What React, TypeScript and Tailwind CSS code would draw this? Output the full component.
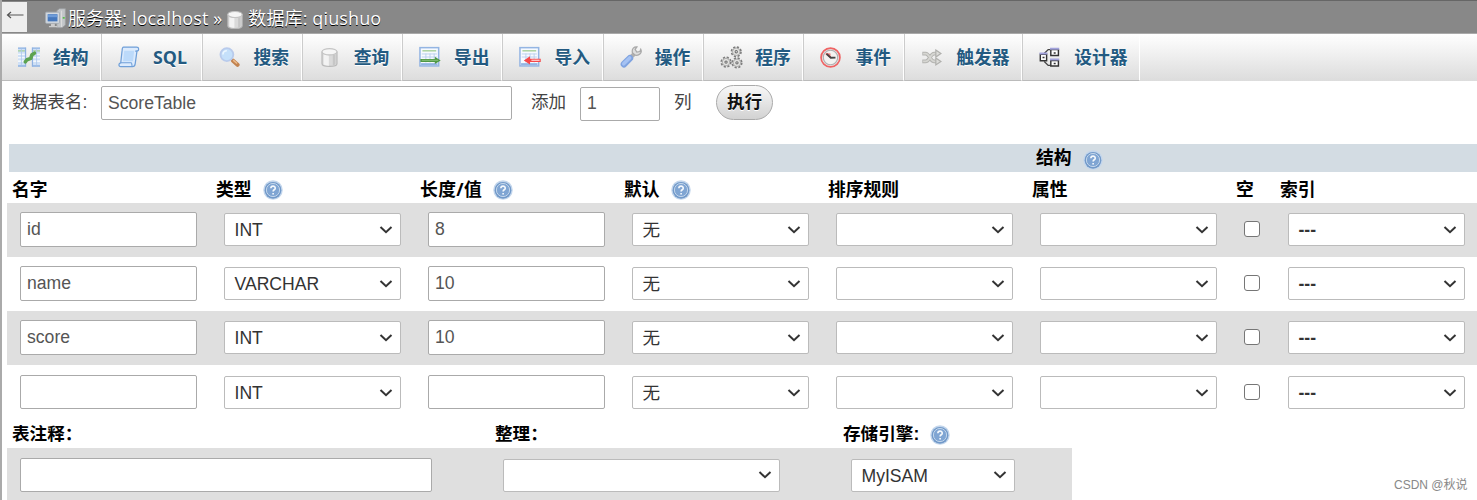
import type { ReactNode } from "react";

const sans = "font-['Liberation_Sans','Noto_Sans_CJK_SC',sans-serif]";
const ui = "font-['Open_Sans','Noto_Sans_CJK_SC',sans-serif]";

function Icon({ children, className = "h-[21px] w-[21px]" }: { children: ReactNode; className?: string }) {
  return (
    <svg viewBox="0 0 16 16" className={`block shrink-0 ${className}`} fill="none">
      {children}
    </svg>
  );
}

function StructureIcon() {
  return (
    <Icon className="h-[22px] w-[22px]">
      <path d="M0 1.200h5.500v13.600H0zM10.500 1.200H16v13.600h-5.500z" fill="#cfe0f6" />
      <path d="M0 1.500h5.500M10.500 1.500H16M0 14.500h5.500M10.500 14.500H16" stroke="#8db1e2" />
      <path d="M0 3.500h5M11 3.500h5" stroke="#a5cf98" />
      <path d="M0 6h5M0 8.500h5M0 11h5M11 6h5M11 8.500h5M11 11h5" stroke="#fff" strokeWidth=".8" />
      <path d="M5.500 1v14M10.500 1v14" stroke="#8fb2e2" strokeWidth=".9" />
      <path d="M2.500 2v12M13.500 2v12" stroke="#adc8ec" strokeWidth=".6" />
      <path d="M5.300 11.500 6.500 10 9.300 9l.8-2.600L12 5.200" stroke="#5ca350" strokeWidth="2.600" strokeLinecap="round" strokeLinejoin="round" />
    </Icon>
  );
}

function SqlIcon() {
  return (
    <Icon className="h-[22px] w-[22px]">
      <path d="M4 .8h9.500c2 0 2 2.700.3 2.900L12.500 13c-.2 1.600-.8 2-2 2H2C.2 15 .3 12.300 2 12.200L3 3C3.100 1.400 3.300.8 4 .8z" fill="#dcebfd" stroke="#6f9fd8" strokeWidth=".9" />
      <path d="M12.500 3.700h1.500M2 12.200h7.500c1 0 .2 2.500 1 2.500" stroke="#6f9fd8" strokeWidth=".8" />
      <path d="M4.500 3.500h7.300l-.9 7.500H3.700z" fill="#bcdafa" />
    </Icon>
  );
}

function SearchIcon() {
  return (
    <Icon>
      <path d="m10.700 10.500 3.400 3" stroke="#c28350" strokeWidth="3.200" strokeLinecap="round" />
      <path d="m10.800 10 3 2.600" stroke="#edbd8d" strokeWidth="1.100" />
      <circle cx="6" cy="5.800" r="4.900" fill="#c5e0fa" stroke="#b9cbec" strokeWidth="1.400" />
      <path d="M3 5.800c0-2 1.300-3 3-3" stroke="#edf7ff" strokeWidth="1.200" />
    </Icon>
  );
}

function DatabaseIcon({ className }: { className?: string }) {
  return (
    <Icon className={className}>
      <path d="M2.300 3.500v9.300c0 2.700 11.400 2.700 11.400 0V3.500" fill="#dadada" stroke="#b9b9b9" strokeWidth=".9" />
      <path d="M3.500 5.500v7.700c1 .8 2.500 1 4 1V6.500z" fill="#f3f3f3" />
      <path d="M12.500 5.500v7.700c-.6.500-1.300.6-2 .8V6.200z" fill="#c6c6c6" />
      <ellipse cx="8" cy="3.600" rx="5.700" ry="2.400" fill="#f6f6f6" stroke="#c4c4c4" strokeWidth=".9" />
    </Icon>
  );
}

function Sheet() {
  return (
    <>
      <rect x=".7" y="1.200" width="13.600" height="13.300" fill="#f7faff" stroke="#94b5e3" strokeWidth="1.100" />
      <path d="M2.500 3.500h10" stroke="#a5cf98" />
      <path d="M2 5.800h11M2 8h11M5 5.500V12M8 5.500V12M11 5.500V12" stroke="#bad0ee" strokeWidth=".7" />
      <path d="M1.500 13.200h12" stroke="#94b5e3" strokeWidth="1.500" />
    </>
  );
}

function ExportIcon() {
  return (
    <Icon className="h-[22px] w-[22px]">
      <Sheet />
      <path d="M1 9.400h10.500V7.900l4.300 2.600-4.300 2.600v-1.500H1z" fill="#4f9845" />
      <path d="M2 10.400h12" stroke="#92c987" strokeWidth=".6" />
    </Icon>
  );
}

function ImportIcon() {
  return (
    <Icon className="h-[22px] w-[22px]">
      <Sheet />
      <path d="M15.800 9.200v2.500H8v1.800l-4.500-3L8 7.400v1.800z" fill="#f6494b" />
      <path d="M9 10.400h6" stroke="#ffc2c2" strokeWidth="1" />
    </Icon>
  );
}

function WrenchIcon() {
  return (
    <Icon className="h-[22px] w-[22px]">
      <path d="m8 8 3.500-3.300" stroke="#b0b0b0" strokeWidth="3" />
      <path d="M9 4.800C8.400 1.800 10.300.5 12.300.7L11 2.400l1.200 2 2.300-.4.600-1.600c1.300 2.700-1.500 5.200-4.500 4z" fill="#dedede" stroke="#a9a9a9" strokeWidth=".9" />
      <path d="m2.900 13.200 4.300-4.300" stroke="#7fa3e0" strokeWidth="4.800" strokeLinecap="round" />
      <path d="m2.700 12.900 4.300-4.200" stroke="#a5c2f3" strokeWidth="2.600" strokeLinecap="round" />
    </Icon>
  );
}

function Cog({ x, y }: { x: number; y: number }) {
  return (
    <g>
      <circle cx={x} cy={y} r="3.300" stroke="#7d7d7d" strokeWidth="1.200" strokeDasharray="1.500 1.100" fill="#e6e6e6" />
      <circle cx={x} cy={y} r="2.600" fill="#e2e2e0" stroke="#999" strokeWidth=".5" />
      <circle cx={x} cy={y} r=".8" fill="#eee" stroke="#6b6b6b" strokeWidth=".7" />
    </g>
  );
}

function RoutinesIcon() {
  return (
    <Icon className="h-[23px] w-[23px]">
      <Cog x={11.300} y={4} />
      <Cog x={4.200} y={11.200} />
      <Cog x={11.800} y={11.700} />
    </Icon>
  );
}

function ClockIcon() {
  return (
    <Icon>
      <circle cx="8" cy="8" r="7.200" fill="#e7e7e7" stroke="#ef6464" strokeWidth="1.300" />
      <circle cx="8" cy="8" r="5.500" fill="#f3f3f1" stroke="#b0b0b0" strokeWidth=".9" />
      <path d="M4.300 4.600 8 5v3z" fill="#ee7a78" />
      <path d="m4.500 5 3.700 3" stroke="#e65757" strokeWidth="1.200" />
      <path d="m5 5.200 3.200 3 3.600-.1" stroke="#444" strokeWidth="1.400" />
    </Icon>
  );
}

function TriggerIcon() {
  return (
    <Icon>
      <path d="M1 5h2.500c3 0 3.500 6 6.500 6h2M1 11h2.500c3 0 3.500-6 6.500-6h2" stroke="#b4b4b1" strokeWidth="2.800" />
      <path d="M1.600 5h2c3 0 3.500 6 6.500 6h2M1.600 11h2c3 0 3.500-6 6.500-6h2" stroke="#d6d6d2" strokeWidth="1.300" />
      <path d="m11.300 2.300 3.900 2.700-3.900 2.700zM11.300 8.300l3.900 2.700-3.900 2.700z" fill="#dcdcd9" stroke="#b0b0ad" strokeWidth=".9" />
    </Icon>
  );
}

function DesignerIcon() {
  return (
    <Icon>
      <path d="M4 5 7 2h2M4 11l3 3h2" stroke="#444" />
      <path d="M1 5.500h4.800v5H1zM9 2h5.800v4.500H9zM9 10.300h5.800v4.200H9z" fill="#fff" stroke="#333" strokeWidth="1.100" />
      <path d="M.4 4.900h6M8.400 1.400h7M8.400 9.600h7" stroke="#a3a3dc" strokeWidth="1.500" />
      <path d="M2.700 8h1.500M11.200 4.500h1.500M11.200 12.500h1.500" stroke="#333" strokeWidth="1.100" />
    </Icon>
  );
}

function ServerIcon() {
  return (
    <Icon className="h-[21px] w-[21px]">
      <path d="m9 2 2-1.500h4.500V13L13 15H9z" fill="#c3c6c9" stroke="#9b9ea1" strokeWidth=".6" />
      <path d="M12.600 2v12.500" stroke="#dcdcdc" strokeWidth=".8" />
      <path d="M13.500 7.500H15" stroke="#55c046" strokeWidth="1.300" />
      <rect x=".5" y="3.200" width="10.500" height="8.500" rx=".6" fill="#d4dae1" stroke="#a6adb5" strokeWidth=".7" />
      <path d="M2 4.700h7.500v5.500H2z" fill="#4678bd" />
      <path d="M2.300 5h7v2h-7z" fill="#6d9bd8" />
      <path d="M4.500 12h3v1.700h1.700v1H3v-1h1.500z" fill="#ccc" />
    </Icon>
  );
}

function HelpIcon({ className = "mt-px" }: { className?: string }) {
  return (
    <Icon className={`h-5 w-5 ${className}`}>
      <circle cx="8" cy="8" r="7.800" fill="#c3d6ec" />
      <circle cx="8" cy="8.200" r="6.700" fill="#7199c9" />
      <circle cx="8" cy="8" r="5.300" fill="#7fa5d3" stroke="#c3d6eb" strokeWidth=".8" />
      <path d="M6.300 6.600c0-2.300 3.500-2.300 3.500-.1 0 1.300-1.700 1.300-1.700 2.600M8.100 10.300v1.300" stroke="#f4f8fc" strokeWidth="1.300" />
    </Icon>
  );
}

const tabs: { label: string; icon: ReactNode; width: string }[] = [
  { label: "结构", icon: <StructureIcon />, width: "w-[99px]" },
  { label: "SQL", icon: <SqlIcon />, width: "w-[100.500px]" },
  { label: "搜索", icon: <SearchIcon />, width: "w-[100.200px]" },
  { label: "查询", icon: <DatabaseIcon />, width: "w-[100.400px]" },
  { label: "导出", icon: <ExportIcon />, width: "w-[100.300px]" },
  { label: "导入", icon: <ImportIcon />, width: "w-[100.300px]" },
  { label: "操作", icon: <WrenchIcon />, width: "w-[100.500px]" },
  { label: "程序", icon: <RoutinesIcon />, width: "w-[100.300px]" },
  { label: "事件", icon: <ClockIcon />, width: "w-[100.700px]" },
  { label: "触发器", icon: <TriggerIcon />, width: "w-[118px]" },
  { label: "设计器", icon: <DesignerIcon />, width: "w-[118px]" },
];

function Field({ value = "", className }: { value?: string; className: string }) {
  return (
    <input
      readOnly
      value={value}
      className={`block shrink-0 rounded-[2px] border border-[#aaa] bg-white px-1.5 text-[17.600px] text-[#555] outline-none ${className}`}
    />
  );
}

function Select({ value = "", className = "w-[177px]" }: { value?: string; className?: string }) {
  return (
    <div className={`flex h-[33px] shrink-0 items-center justify-between rounded-[2px] border border-[#bbb] bg-white pr-[7px] pl-[9.500px] text-[17.600px] text-[#333] ${className}`}>
      <span className={value === "---" ? "mt-px leading-6 font-bold" : "mt-px leading-6"}>{value}</span>
      <svg viewBox="0 0 14 10" className="h-2.5 w-3.5" fill="none">
        <path d="m1.500 2 5.500 5.200L12.500 2" stroke="#333" strokeWidth="2" />
      </svg>
    </div>
  );
}

const columns = [
  { label: "名字", help: false },
  { label: "类型", help: true },
  { label: "长度/值", help: true },
  { label: "默认", help: true },
  { label: "排序规则", help: false },
  { label: "属性", help: false },
  { label: "空", help: false },
  { label: "索引", help: false },
];

const rows = [
  { name: "id", type: "INT", length: "8" },
  { name: "name", type: "VARCHAR", length: "10" },
  { name: "score", type: "INT", length: "10" },
  { name: "", type: "INT", length: "" },
];

const gridCols = "grid grid-cols-[204px_204px_204px_204px_204px_204px_44px_197px]";

export default function App() {
  return (
    <div className={`flex h-[500px] w-[1477px] flex-col overflow-hidden border-l-2 border-[#aaa] bg-white text-[17.600px] text-[#444] ${sans}`}>
      <header className="flex h-[34px] shrink-0 border-t border-b border-t-[#666] border-b-[#aaa] bg-[#888]">
        <div className="mt-px flex h-[30px] w-[25px] justify-center bg-[#eee]">
          <svg viewBox="0 0 18 12" className="mt-[7px] h-3 w-[18px]" fill="none">
            <path d="M1.500 6h16M5 3 1.500 6 5 9" stroke="#555" strokeWidth="1.200" />
          </svg>
        </div>
        <div className={`flex items-center pt-[3px] pl-[18px] text-[18px] text-white [text-shadow:0_1px_0_#000] ${ui}`}>
          <ServerIcon />
          <span className="ml-0.5 whitespace-pre tracking-[0.12px]">服务器: localhost »</span>
          <DatabaseIcon className="mt-0.5 ml-[3px] h-5 w-5" />
          <span className="ml-[3px] tracking-[0.12px]">数据库: qiushuo</span>
        </div>
      </header>

      <nav className="flex h-[47px] shrink-0 bg-linear-to-b from-white to-[#dcdcdc]">
        {tabs.map((tab, i) => (
          <a
            key={tab.label}
            className={`flex shrink-0 items-center border-r border-b border-r-white border-b-[#bbb] text-[17.800px] font-bold text-[#235a81] [text-shadow:0_1px_0_#fff] ${ui} ${tab.width} ${i === 0 ? "pl-4" : "border-l border-l-[#ccc] pl-4"}`}
          >
            <span className="flex w-[35px] shrink-0">{tab.icon}</span>
            <span className="whitespace-nowrap">{tab.label}</span>
          </a>
        ))}
      </nav>

      <section className="flex h-[63px] shrink-0 items-start pl-2.5">
        <label className="w-[89px] pt-[9px] leading-6">数据表名:</label>
        <Field value="ScoreTable" className="mt-[5px] h-[34px] w-[411px]" />
        <span className="ml-[19px] w-[49px] pt-[9px] leading-6">添加</span>
        <Field value="1" className="mt-1.5 h-[34px] w-20 pb-0.5" />
        <span className="ml-3.5 w-[42px] pt-[9px] leading-6">列</span>
        <button className="mt-1 h-[35px] w-[57px] rounded-full border border-[#aaa] bg-linear-to-b from-[#f8f8f8] to-[#d2d2d2] font-bold text-[#111] [text-shadow:0_1px_0_#fff]">
          执行
        </button>
      </section>

      <section className="shrink-0 pl-[5px]">
        <div className="ml-0.5 flex h-7 items-center bg-[#d3dce3] pl-[1027px] text-[17.800px] font-bold text-black">
          <span>结构</span>
          <HelpIcon className="mt-[3px] ml-[11px]" />
        </div>
        <div className={`h-[31px] items-center pt-[3px] pl-[5px] text-[17.800px] font-bold text-black ${ui} ${gridCols}`}>
          {columns.map((column) => (
            <div key={column.label} className="flex items-center gap-[11px] whitespace-nowrap">
              <span className={column.label === "长度/值" ? "tracking-[0.400px]" : ""}>{column.label}</span>
              {column.help && <HelpIcon />}
            </div>
          ))}
        </div>
        {rows.map((row, i) => {
          const last = i === rows.length - 1;
          const select = last ? "mt-px w-[177px]" : "mb-px w-[177px]";
          const field = last ? "h-[34px] w-[177px]" : "mb-px h-[35px] w-[177px]";
          return (
            <div key={i} className={`h-[54px] items-center pl-[13px] ${gridCols} ${i % 2 === 0 ? "bg-[#dfdfdf]" : "bg-white"}`}>
              <Field value={row.name} className={field} />
              <Select value={row.type} className={select} />
              <Field value={row.length} className={field} />
              <Select value="无" className={select} />
              <Select className={select} />
              <Select className={select} />
              <span className={`h-4 w-4 rounded-[3px] border-[1.500px] border-[#767676] bg-white ${last ? "" : "mb-0.5"}`} />
              <Select value="---" className={select} />
            </div>
          );
        })}
      </section>

      <section className="shrink-0 pl-[5px]">
        <div className="grid h-[29px] grid-cols-[483px_348px_229px] items-center pt-0.5 pl-[5px] font-bold text-black">
          <span>表注释：</span>
          <span>整理：</span>
          <span className="flex items-center gap-[11px]">存储引擎: <HelpIcon className="mt-0.5" /></span>
        </div>
        <div className="flex">
          <div className="grid h-[52px] w-[1065px] grid-cols-[483px_348px_221px] items-center bg-[#dfdfdf] pt-0.5 pl-[13px]">
            <Field className="h-[34px] w-[412px]" />
            <Select className="w-[277px]" />
            <Select value="MyISAM" className="w-[164px]" />
          </div>
          <span className="ml-[322px] pt-[29px] text-[12px] leading-4 text-[#888]">CSDN @秋说</span>
        </div>
      </section>
    </div>
  );
}
